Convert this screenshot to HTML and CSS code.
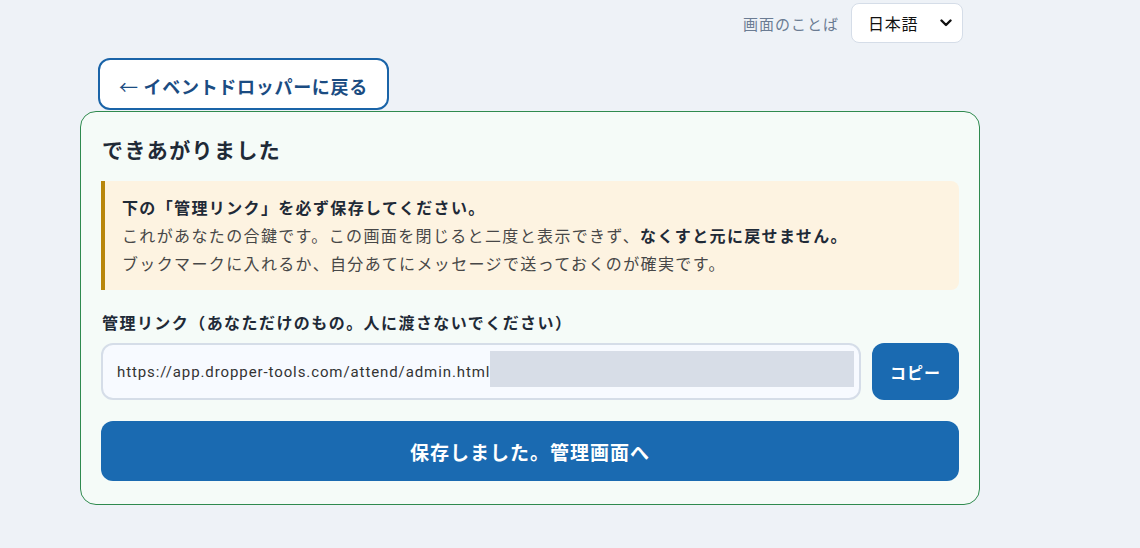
FILE: index.html
```html
<!DOCTYPE html>
<html lang="ja">
<head>
<meta charset="utf-8">
<title>できあがりました</title>
<link rel="stylesheet" href="styles.css">
</head>
<body>
<div class="page">
  <div class="topbar">
    <span class="lang-label">画面のことば</span>
    <div class="lang-select">
      <span>日本語</span>
      <svg class="chev" width="12" height="8" viewBox="0 0 12 8"><path d="M1.5 1.5 L6 6 L10.5 1.5" fill="none" stroke="#111" stroke-width="2.4" stroke-linecap="round" stroke-linejoin="round"/></svg>
    </div>
  </div>
  <div class="back-wrap">
    <a class="back-btn" href="#"><span class="arrow">←</span> イベントドロッパーに戻る</a>
  </div>
  <section class="card">
    <h1 class="title">できあがりました</h1>
    <div class="notice">
      <p class="strong">下の「管理リンク」を必ず保存してください。</p>
      <p>これがあなたの合鍵です。この画面を閉じると二度と表示できず、<b>なくすと元に戻せません。</b></p>
      <p>ブックマークに入れるか、自分あてにメッセージで送っておくのが確実です。</p>
    </div>
    <div class="label">管理リンク（あなただけのもの。人に渡さないでください）</div>
    <div class="link-row">
      <div class="link-input"><span class="url">https://app.dropper-tools.com/attend/admin.html</span><span class="sel"></span></div>
      <button class="copy-btn">コピー</button>
    </div>
    <button class="main-btn">保存しました。管理画面へ</button>
  </section>
</div>
</body>
</html>
```
FILE: styles.css
```css
* { box-sizing: border-box; }
html, body { margin: 0; padding: 0; }
body {
  background: #eef2f7;
  font-family: "Noto Sans CJK JP", "Noto Sans", sans-serif;
  color: #1f2a37;
  letter-spacing: 0.07em;
}
.page {
  width: 900px;
  margin-left: 80px;
}
.topbar {
  display: flex;
  justify-content: flex-end;
  align-items: center;
  gap: 12px;
  margin-top: 3px;
  padding-right: 17px;
  height: 40px;
}
.lang-label {
  font-size: 15px;
  color: #6b7c93;
  letter-spacing: 1px;
}
.lang-select {
  width: 112px;
  height: 40px;
  background: #fff;
  border: 1px solid #d5dde8;
  border-radius: 8px;
  display: flex;
  align-items: center;
  justify-content: space-between;
  padding: 0 10px 0 16px;
  font-size: 16px;
  letter-spacing: 0.7px;
  color: #111;
}
.chev { display: block; }
.back-wrap {
  padding-left: 18px;
  margin-top: 15px;
}
.back-btn {
  display: inline-flex;
  align-items: center;
  justify-content: center;
  width: 291px;
  height: 52px;
  padding-top: 4px;
  border: 2px solid #1a64a8;
  border-radius: 12px;
  background: #fff;
  color: #1b4c82;
  font-weight: 700;
  font-size: 18px;
  letter-spacing: 0.7px;
  text-decoration: none;
  white-space: pre;
  position: relative;
  z-index: 1;
}
.arrow {
  font-weight: 400;
  font-size: 19px;
}
.card {
  margin-top: 1px;
  background: #f5fbf8;
  border: 1px solid #2f8a4f;
  border-radius: 16px;
  padding: 23px 20px 23px 20px;
}
.title {
  margin: 0 0 18px 1px;
  font-size: 21px;
  line-height: 28px;
  font-weight: 700;
  color: #1f2a37;
  letter-spacing: 1.4px;
}
.notice {
  background: #fdf3e1;
  border-left: 4px solid #b8860b;
  border-radius: 0 8px 8px 0;
  padding: 12px 18px 13px 17px;
  font-size: 16px;
  line-height: 28px;
  color: #474747;
  letter-spacing: 0.085em;
}
.notice p { margin: 0; }
.notice .strong, .notice b { font-weight: 700; color: #1f2a37; }
.label {
  margin-top: 20px;
  margin-left: 1px;
  font-size: 16px;
  line-height: 24px;
  font-weight: 700;
  color: #1f2a37;
  letter-spacing: 0.09em;
}
.link-row {
  display: flex;
  gap: 11px;
  margin-top: 9px;
}
.link-input {
  flex: 1;
  height: 57px;
  border: 2px solid #d5dde8;
  border-radius: 12px;
  background: #f7faff;
  display: flex;
  align-items: center;
  padding: 0 5px 0 14px;
  overflow: hidden;
}
.url {
  font-family: Roboto, "Noto Sans", sans-serif;
  font-size: 15px;
  letter-spacing: 0.06em;
  color: #333;
  white-space: nowrap;
}
.sel {
  flex: 1;
  height: 36px;
  margin-bottom: 6px;
  background: #d7dde7;
}
.copy-btn {
  width: 87px;
  height: 57px;
  border: none;
  border-radius: 12px;
  background: #1a6ab1;
  color: #fff;
  font-family: inherit;
  font-size: 16px;
  letter-spacing: 1px;
  font-weight: 700;
}
.main-btn {
  display: block;
  width: 100%;
  height: 60px;
  margin-top: 21px;
  border: none;
  border-radius: 12px;
  background: #1a6ab1;
  color: #fff;
  font-family: inherit;
  font-size: 19px;
  font-weight: 700;
  letter-spacing: 1px;
}
```
